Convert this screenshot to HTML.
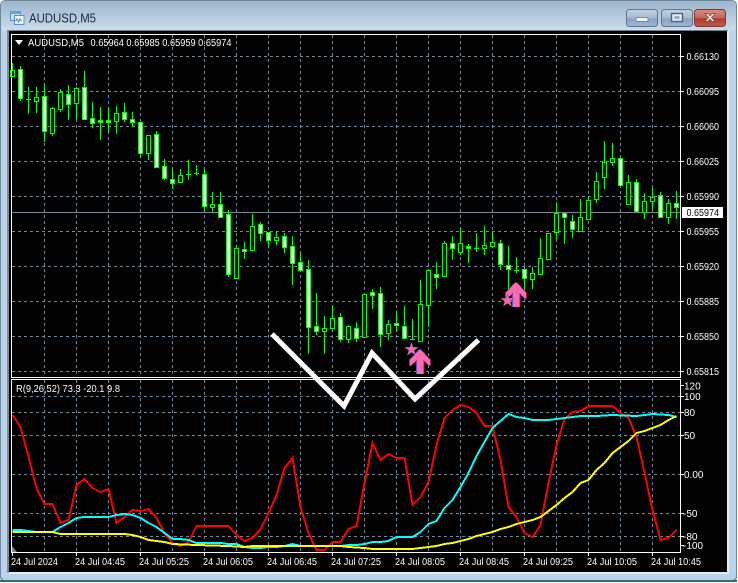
<!DOCTYPE html>
<html><head><meta charset="utf-8"><title>AUDUSD,M5</title>
<style>
html,body{margin:0;padding:0;width:738px;height:583px;overflow:hidden;background:#fff}
svg{display:block}
text{font-family:"Liberation Sans",sans-serif;font-size:10px;fill:#fff}
</style></head><body>
<svg width="738" height="583" viewBox="0 0 738 583" xmlns="http://www.w3.org/2000/svg">
<defs>
<linearGradient id="tb" x1="0" y1="0" x2="0" y2="1"><stop offset="0" stop-color="#9db6ce"/><stop offset=".5" stop-color="#b4c9dc"/><stop offset="1" stop-color="#cddde9"/></linearGradient>
<linearGradient id="btn" x1="0" y1="0" x2="0" y2="1"><stop offset="0" stop-color="#c3d3e2"/><stop offset=".5" stop-color="#a5bbd1"/><stop offset=".55" stop-color="#87a3be"/><stop offset="1" stop-color="#9fb9d2"/></linearGradient>
<linearGradient id="cls" x1="0" y1="0" x2="0" y2="1"><stop offset="0" stop-color="#d98e80"/><stop offset=".5" stop-color="#c4675a"/><stop offset=".55" stop-color="#b03a2b"/><stop offset="1" stop-color="#c25a4a"/></linearGradient>
</defs>
<!-- window chrome -->
<rect x="0" y="0" width="738" height="583" fill="#fff"/>
<rect x="0" y="0" width="737" height="582" rx="5" fill="#6f8798"/>
<rect x="1" y="1" width="735" height="579" rx="4" fill="#b9d3ea"/>
<rect x="1" y="1" width="735" height="30" rx="4" fill="url(#tb)"/>
<rect x="7" y="30" width="722" height="544" fill="#e6eef5"/>
<rect x="7" y="30" width="2" height="543" fill="#7f8a94"/>
<rect x="7" y="30" width="721" height="1" fill="#6f7f8d"/>
<rect x="9" y="31" width="718" height="541" fill="#000"/>
<rect x="0" y="580" width="737" height="2" fill="#2c6f7e"/>
<!-- title -->
<g>
<rect x="10.5" y="11.5" width="10" height="9" fill="#cfe2f5" stroke="#5c8ed0"/>
<rect x="10.5" y="11.5" width="10" height="2.5" fill="#6ea0dc"/>
<rect x="14.5" y="15.5" width="9.5" height="9" fill="#eef5fc" stroke="#5c8ed0"/>
<path d="M15.5 21l1.5-2 1.5 3 1.5-3 1.5 2" fill="none" stroke="#4a7cc0"/>
</g>
<text x="29" y="22.5" style="font-size:12.5px;fill:#17283a" textLength="67" lengthAdjust="spacingAndGlyphs">AUDUSD,M5</text>
<!-- buttons -->
<rect x="626.5" y="9.5" width="31" height="17" rx="3" fill="url(#btn)" stroke="#5d7690"/>
<rect x="636" y="17.5" width="12" height="4" rx="1" fill="#eef3f7" stroke="#58708a" stroke-width=".7"/>
<rect x="661.5" y="9.5" width="31" height="17" rx="3" fill="url(#btn)" stroke="#5d7690"/>
<rect x="671.5" y="13.5" width="11" height="8" fill="#dfe8f0" stroke="#4e6478" stroke-width="1.4"/>
<rect x="674.5" y="16" width="5" height="3" fill="#93aac0"/>
<rect x="694.5" y="9.5" width="31" height="17" rx="3" fill="url(#cls)" stroke="#7d3a34"/>
<path d="M705 13.5h3l2 2.5 2-2.5h3l-3.5 4 3.5 4h-3l-2-2.5-2 2.5h-3l3.5-4z" fill="#f4f1ee" stroke="#6a4a48" stroke-width=".7"/>

<!-- grid -->
<g stroke="#778899" stroke-width="1" stroke-dasharray="3 3" shape-rendering="crispEdges" fill="none">
<path d="M12 56.5H680M12 91.5H680M12 126.5H680M12 161.5H680M12 196.5H680M12 231.5H680M12 266.5H680M12 301.5H680M12 336.5H680M12 371.5H680"/>
<path d="M12 396.5H680M12 412.5H680M12 435.5H680M12 474.5H680M12 513.5H680M12 536.5H680"/>
<path d="M44.5 35V377M76.5 35V377M108.5 35V377M140.5 35V377M172.5 35V377M204.5 35V377M236.5 35V377M268.5 35V377M300.5 35V377M332.5 35V377M364.5 35V377M396.5 35V377M428.5 35V377M460.5 35V377M492.5 35V377M524.5 35V377M556.5 35V377M588.5 35V377M620.5 35V377M652.5 35V377"/>
<path d="M44.5 380V552M76.5 380V552M108.5 380V552M140.5 380V552M172.5 380V552M204.5 380V552M236.5 380V552M268.5 380V552M300.5 380V552M332.5 380V552M364.5 380V552M396.5 380V552M428.5 380V552M460.5 380V552M492.5 380V552M524.5 380V552M556.5 380V552M588.5 380V552M620.5 380V552M652.5 380V552"/>
</g>
<path d="M12 212.5H680" stroke="#778899" shape-rendering="crispEdges"/>

<!-- candle wicks -->
<path shape-rendering="crispEdges" fill="none" stroke="#0f0" d="M12.5 63V77M20.5 66V101M28.5 87V114M36.5 87V113M44.5 83V142M52.5 107V136M60.5 89V112M68.5 85V120M76.5 87V120M84.5 71V119M92.5 102V128M100.5 107V140M108.5 107V131M116.5 106V134M124.5 103V122M132.5 112V127M140.5 122V157M148.5 135V160M156.5 131V168M164.5 159V180M172.5 170V189M180.5 169V182M188.5 160V180M196.5 165V175M204.5 169V212M212.5 192V212M220.5 192V217M228.5 210V277M236.5 245V278M244.5 242V259M252.5 214V251M260.5 222V241M268.5 232V247M276.5 232V245M284.5 233V253M292.5 236V285M300.5 253V271M308.5 260V354M316.5 293V335M324.5 316V354M332.5 305V328M340.5 313V342M348.5 325V343M356.5 322V342M364.5 294V338M372.5 289V309M380.5 287V347M388.5 320V340M396.5 311V332M404.5 306V339M412.5 319V340M420.5 280V341M428.5 270V327M436.5 262V289M444.5 241V276M452.5 236V260M460.5 228V255M468.5 244V263M476.5 233V252M484.5 226V255M492.5 232V248M500.5 240V270M508.5 246V290M516.5 257V273M524.5 267V293M532.5 267V289M540.5 238V274M548.5 233V259M556.5 202V240M564.5 213V244M572.5 215V238M580.5 199V231M588.5 197V219M596.5 172V203M604.5 141V189M612.5 143V166M620.5 158V187M628.5 175V204M636.5 179V212M644.5 193V219M652.5 188V210M660.5 192V217M668.5 199V224M676.5 191V219"/>
<path shape-rendering="crispEdges" fill="none" stroke="#0f0" d="M26 99.500h5M186 174.500h5M194 173.500h5M474 248.500h5M410 339.500h5M514 270.500h5"/>
<!-- hollow bodies -->
<path shape-rendering="crispEdges" fill="#000" stroke="#0f0" d="M10.500 70.500h4v6h-4zM34.500 97.500h4v4h-4zM50.500 108.500h4v25h-4zM58.500 92.500h4v17h-4zM74.500 88.500h4v15h-4zM114.500 113.500h4v8h-4zM146.500 135.500h4v18h-4zM178.500 175.500h4v7h-4zM210.500 204.500h4v3h-4zM234.500 248.500h4v30h-4zM250.500 226.500h4v24h-4zM274.500 237.500h4v3h-4zM322.500 328.500h4v3h-4zM330.500 318.500h4v10h-4zM346.500 326.500h4v13h-4zM362.500 294.500h4v43h-4zM386.500 324.500h4v9h-4zM418.500 304.500h4v37h-4zM426.500 270.500h4v35h-4zM442.500 243.500h4v33h-4zM458.500 243.500h4v9h-4zM482.500 245.500h4v3h-4zM490.500 242.500h4v4h-4zM530.500 273.500h4v6h-4zM538.500 258.500h4v16h-4zM546.500 233.500h4v26h-4zM554.500 213.500h4v19h-4zM578.500 217.500h4v14h-4zM586.500 200.500h4v19h-4zM594.500 181.500h4v18h-4zM602.500 162.500h4v15h-4zM610.500 158.500h4v4h-4zM626.500 182.500h4v22h-4zM642.500 201.500h4v11h-4zM650.500 197.500h4v4h-4zM666.500 203.500h4v14h-4z"/>
<!-- white bodies -->
<path shape-rendering="crispEdges" fill="#fff" stroke="#0f0" d="M18.500 69.500h4v29h-4zM42.500 96.500h4v35h-4zM66.500 94.500h4v10h-4zM82.500 87.500h4v32h-4zM90.500 118.500h4v5h-4zM98.500 120.500h4v2h-4zM106.500 120.500h4v2h-4zM122.500 112.500h4v7h-4zM130.500 119.500h4v3h-4zM138.500 122.500h4v31h-4zM154.500 134.500h4v33h-4zM162.500 166.500h4v12h-4zM170.500 179.500h4v4h-4zM202.500 174.500h4v32h-4zM218.500 204.500h4v13h-4zM226.500 214.500h4v60h-4zM242.500 249.500h4v2h-4zM258.500 224.500h4v9h-4zM266.500 232.500h4v8h-4zM282.500 236.500h4v11h-4zM290.500 246.500h4v17h-4zM298.500 262.500h4v8h-4zM306.500 269.500h4v58h-4zM314.500 326.500h4v5h-4zM338.500 317.500h4v22h-4zM354.500 328.500h4v10h-4zM370.500 292.500h4v3h-4zM378.500 293.500h4v41h-4zM394.500 323.500h4v2h-4zM402.500 326.500h4v12h-4zM434.500 274.500h4v3h-4zM450.500 243.500h4v5h-4zM466.500 246.500h4v2h-4zM498.500 243.500h4v21h-4zM506.500 265.500h4v4h-4zM522.500 269.500h4v9h-4zM562.500 213.500h4v4h-4zM570.500 221.500h4v8h-4zM618.500 158.500h4v27h-4zM634.500 182.500h4v29h-4zM658.500 195.500h4v22h-4zM674.500 203.500h4v4h-4z"/>

<!-- indicator -->
<g fill="none" stroke-width="2" stroke-linejoin="miter" shape-rendering="crispEdges">
<polyline stroke="#f00" points="12.5,415 20.5,427 28.5,457 36.5,488 44.5,504 52.5,504 60.5,523 68.5,520 76.5,485 84.5,479 92.5,488 100.5,492 108.5,489 116.5,523 124.5,517 132.5,510 140.5,511 148.5,509 156.5,518 164.5,533 172.5,543 180.5,546 188.5,542 196.5,526 204.5,526 212.5,526 220.5,526 228.5,526 236.5,535 244.5,541 252.5,538 260.5,529 268.5,513 276.5,495 284.5,468 292.5,458 300.5,507 308.5,533 316.5,550 324.5,550 332.5,542 340.5,542 348.5,529 356.5,526 364.5,483 372.5,443 380.5,460 388.5,454 396.5,458 404.5,458 412.5,505 420.5,497 428.5,482 436.5,445 444.5,418 452.5,410 460.5,405 468.5,407 476.5,413 484.5,426 492.5,426 500.5,460 508.5,507 516.5,517 524.5,533 532.5,537 540.5,525 548.5,483 556.5,445 564.5,419 572.5,412 580.5,411 588.5,406 596.5,406 604.5,406 612.5,406 620.5,413 628.5,418 636.5,437 644.5,473 652.5,510 660.5,540 668.5,538 676.5,530"/>
<polyline stroke="#0ff" points="12.5,530 20.5,530 28.5,531 36.5,532 44.5,532 52.5,532 60.5,527 68.5,523 76.5,518 84.5,517 92.5,517 100.5,517 108.5,517 116.5,515 124.5,514 132.5,515 140.5,518 148.5,523 156.5,527 164.5,533 172.5,539 180.5,539 188.5,540 196.5,543 204.5,543 212.5,543 220.5,543 228.5,544 236.5,544 244.5,547 252.5,548 260.5,548 268.5,547 276.5,547 284.5,546 292.5,544 300.5,546 340.5,546 348.5,545 356.5,545 364.5,544 372.5,542 380.5,542 388.5,541 396.5,537 404.5,537 412.5,537 420.5,532 428.5,524 436.5,521 444.5,508 452.5,500 460.5,487 468.5,473 476.5,456 484.5,442 492.5,428 500.5,421 508.5,414 516.5,417 524.5,418 532.5,420 540.5,420 548.5,420 556.5,419 564.5,418 572.5,417 580.5,416 596.5,416 612.5,415 636.5,416 652.5,414 668.5,415 676.5,417"/>
<polyline stroke="#ff0" points="12.5,532 36.5,532 52.5,532 60.5,534 124.5,534 132.5,535 140.5,537 148.5,540 164.5,542 172.5,544 196.5,545 228.5,546 244.5,547 252.5,546 340.5,546 348.5,547 364.5,548 372.5,549 396.5,549 412.5,549 420.5,548 428.5,547 436.5,546 444.5,544 452.5,543 460.5,541 468.5,539 476.5,536 484.5,534 492.5,532 500.5,529 508.5,527 516.5,524 524.5,522 532.5,520 540.5,517 548.5,511 556.5,505 564.5,498 572.5,492 580.5,483 588.5,480 596.5,470 604.5,463 612.5,453 620.5,447 628.5,441 636.5,433 644.5,431 652.5,428 660.5,425 668.5,420 676.5,416"/>
</g>
<path d="M12 552l5 0-5-6z" fill="#778899"/>

<!-- frames -->
<g fill="none" stroke="#fff" shape-rendering="crispEdges">
<rect x="11.5" y="34.5" width="669" height="343"/>
<rect x="11.5" y="379.5" width="669" height="173"/>
<path d="M681 56.500h3M681 91.500h3M681 126.500h3M681 161.500h3M681 196.500h3M681 231.500h3M681 266.500h3M681 301.500h3M681 336.500h3M681 371.500h3M681 385.500h3M681 396.500h3M681 412.500h3M681 435.500h3M681 474.500h3M681 513.500h3M681 536.500h3M681 545.500h3"/>
<path d="M12.500 553v3M76.500 553v3M140.500 553v3M204.500 553v3M268.500 553v3M332.500 553v3M396.500 553v3M460.500 553v3M524.500 553v3M588.500 553v3M652.500 553v3"/>
</g>

<!-- drawn zigzag -->
<polyline points="272,334 344,406 372,353 415,399 478.5,340" fill="none" stroke="#fff" stroke-width="5" stroke-linejoin="miter" stroke-miterlimit="3"/>

<!-- arrows & stars -->
<g shape-rendering="crispEdges">
<path transform="translate(411.5 349.5)" fill="#f069ab" stroke="#8a4a90" stroke-width=".5" d="M0-7L1.65-2.27 6.66-2.16 2.67.87 4.11 5.66 0 2.8-4.11 5.66-2.67.87-6.66-2.16-1.65-2.27z"/>
<path fill="#5a50c0" transform="translate(-1 0)" d="M420 349l10 11v6l-6.500-6v14h-6.500v-14l-7 6v-6z"/>
<path fill="#a02040" transform="translate(1 0)" d="M420 349l10 11v6l-6.500-6v14h-6.500v-14l-7 6v-6z"/>
<path fill="#ff69b4" d="M420 349l10 11v6l-6.500-6v14h-6.500v-14l-7 6v-6z"/>
<path fill="#5a50c0" transform="translate(95 -67) translate(-1 0)" d="M421 349l10 11v6l-6.500-6v14h-6.500v-14l-7 6v-6z"/>
<path fill="#a02040" transform="translate(95 -67) translate(1 0)" d="M421 349l10 11v6l-6.500-6v14h-6.500v-14l-7 6v-6z"/>
<path fill="#ff69b4" transform="translate(95 -67)" d="M421 349l10 11v6l-6.500-6v14h-6.500v-14l-7 6v-6z"/>
<path transform="translate(507.500 300.500)" fill="#f069ab" stroke="#8a4a90" stroke-width=".5" d="M0-7L1.65-2.27 6.66-2.16 2.67.87 4.11 5.66 0 2.8-4.11 5.66-2.67.87-6.66-2.16-1.65-2.27z"/>
</g>

<!-- header text -->
<path d="M15 40h8l-4 5z" fill="#fff"/>
<text x="28" y="46" textLength="56" lengthAdjust="spacingAndGlyphs">AUDUSD,M5</text>
<text x="90.500" y="46" textLength="141" lengthAdjust="spacingAndGlyphs">0.65964 0.65985 0.65959 0.65974</text>
<text x="16" y="392" textLength="104" lengthAdjust="spacingAndGlyphs">R(9,26,52) 73.3 -20.1 9.8</text>

<!-- price labels -->
<g>
<text x="686.500" y="60" textLength="32.500" lengthAdjust="spacingAndGlyphs">0.66130</text>
<text x="686.500" y="95" textLength="32.500" lengthAdjust="spacingAndGlyphs">0.66095</text>
<text x="686.500" y="130" textLength="32.500" lengthAdjust="spacingAndGlyphs">0.66060</text>
<text x="686.500" y="165" textLength="32.500" lengthAdjust="spacingAndGlyphs">0.66025</text>
<text x="686.500" y="200" textLength="32.500" lengthAdjust="spacingAndGlyphs">0.65990</text>
<text x="686.500" y="235" textLength="32.500" lengthAdjust="spacingAndGlyphs">0.65955</text>
<text x="686.500" y="270" textLength="32.500" lengthAdjust="spacingAndGlyphs">0.65920</text>
<text x="686.500" y="305" textLength="32.500" lengthAdjust="spacingAndGlyphs">0.65885</text>
<text x="686.500" y="340" textLength="32.500" lengthAdjust="spacingAndGlyphs">0.65850</text>
<text x="686.500" y="375" textLength="32.500" lengthAdjust="spacingAndGlyphs">0.65815</text>
</g>
<rect x="682" y="207" width="41" height="11" fill="#fff"/>
<text x="686.500" y="216" textLength="32.500" lengthAdjust="spacingAndGlyphs" style="fill:#000">0.65974</text>
<!-- sub labels -->
<text x="684" y="389.500">120</text>
<text x="684" y="400">100</text>
<text x="684" y="416">80</text>
<text x="684" y="439">50</text>
<text x="684" y="478">0.00</text>
<text x="683" y="517">-50</text>
<text x="683" y="540">-80</text>
<text x="683" y="549" textLength="20" lengthAdjust="spacingAndGlyphs">-100</text>
<!-- time labels -->
<g>
<text x="11" y="565" textLength="47" lengthAdjust="spacingAndGlyphs">24 Jul 2024</text>
<text x="75" y="565" textLength="50" lengthAdjust="spacingAndGlyphs">24 Jul 04:45</text>
<text x="139" y="565" textLength="50" lengthAdjust="spacingAndGlyphs">24 Jul 05:25</text>
<text x="203" y="565" textLength="50" lengthAdjust="spacingAndGlyphs">24 Jul 06:05</text>
<text x="267" y="565" textLength="50" lengthAdjust="spacingAndGlyphs">24 Jul 06:45</text>
<text x="331" y="565" textLength="50" lengthAdjust="spacingAndGlyphs">24 Jul 07:25</text>
<text x="395" y="565" textLength="50" lengthAdjust="spacingAndGlyphs">24 Jul 08:05</text>
<text x="459" y="565" textLength="50" lengthAdjust="spacingAndGlyphs">24 Jul 08:45</text>
<text x="523" y="565" textLength="50" lengthAdjust="spacingAndGlyphs">24 Jul 09:25</text>
<text x="587" y="565" textLength="50" lengthAdjust="spacingAndGlyphs">24 Jul 10:05</text>
<text x="651" y="565" textLength="50" lengthAdjust="spacingAndGlyphs">24 Jul 10:45</text>
</g>
</svg>
</body></html>
